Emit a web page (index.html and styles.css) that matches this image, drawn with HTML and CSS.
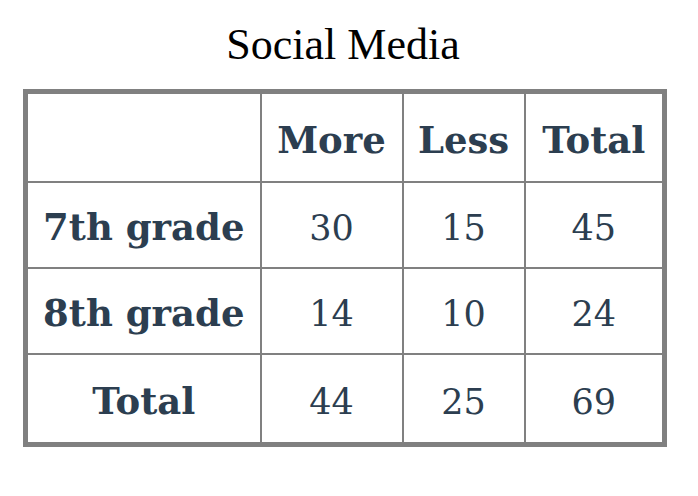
FILE: index.html
```html
<!DOCTYPE html>
<html lang="en">
<head>
<meta charset="utf-8">
<title>Social Media</title>
<link rel="stylesheet" href="styles.css">
</head>
<body>
<div class="chart">
  <div class="title">Social Media</div>
  <table class="grid">
    <colgroup>
      <col class="c-label">
      <col class="c-more">
      <col class="c-less">
      <col class="c-total">
    </colgroup>
    <tr class="row-head">
      <th></th>
      <th>More</th>
      <th>Less</th>
      <th>Total</th>
    </tr>
    <tr>
      <th>7th grade</th>
      <td>30</td>
      <td>15</td>
      <td>45</td>
    </tr>
    <tr>
      <th>8th grade</th>
      <td>14</td>
      <td>10</td>
      <td>24</td>
    </tr>
    <tr class="row-last">
      <th>Total</th>
      <td>44</td>
      <td>25</td>
      <td>69</td>
    </tr>
  </table>
</div>
</body>
</html>
```

FILE: styles.css
```css
html, body {
  margin: 0;
  padding: 0;
  background: #ffffff;
}

.chart {
  padding: 20px 0 0 23px;
  width: 640px;
}

.title {
  font-family: "Liberation Serif", "Times New Roman", serif;
  font-size: 44px;
  line-height: 50px;
  color: #000000;
  text-align: center;
  margin-bottom: 19px;
}

.grid {
  border-collapse: collapse;
  table-layout: fixed;
  width: 639px;
  border: 5px solid #808080;
  font-family: "DejaVu Serif", Georgia, serif;
  color: #2c3e50;
}

.c-label { width: 235px; }
.c-more { width: 142px; }
.c-less { width: 122px; }
.c-total { width: 140px; }

.grid th,
.grid td {
  border: 2px solid #808080;
  height: 78px;
  padding: 0;
  text-align: center;
  vertical-align: middle;
}

.grid th {
  font-size: 37px;
  font-weight: bold;
  padding-top: 4px;
}

.grid td {
  font-size: 35px;
  font-weight: normal;
  padding-top: 6px;
}

.grid .row-head th {
  height: 83px;
}

.grid .row-last th,
.grid .row-last td {
  height: 81px;
}
```
